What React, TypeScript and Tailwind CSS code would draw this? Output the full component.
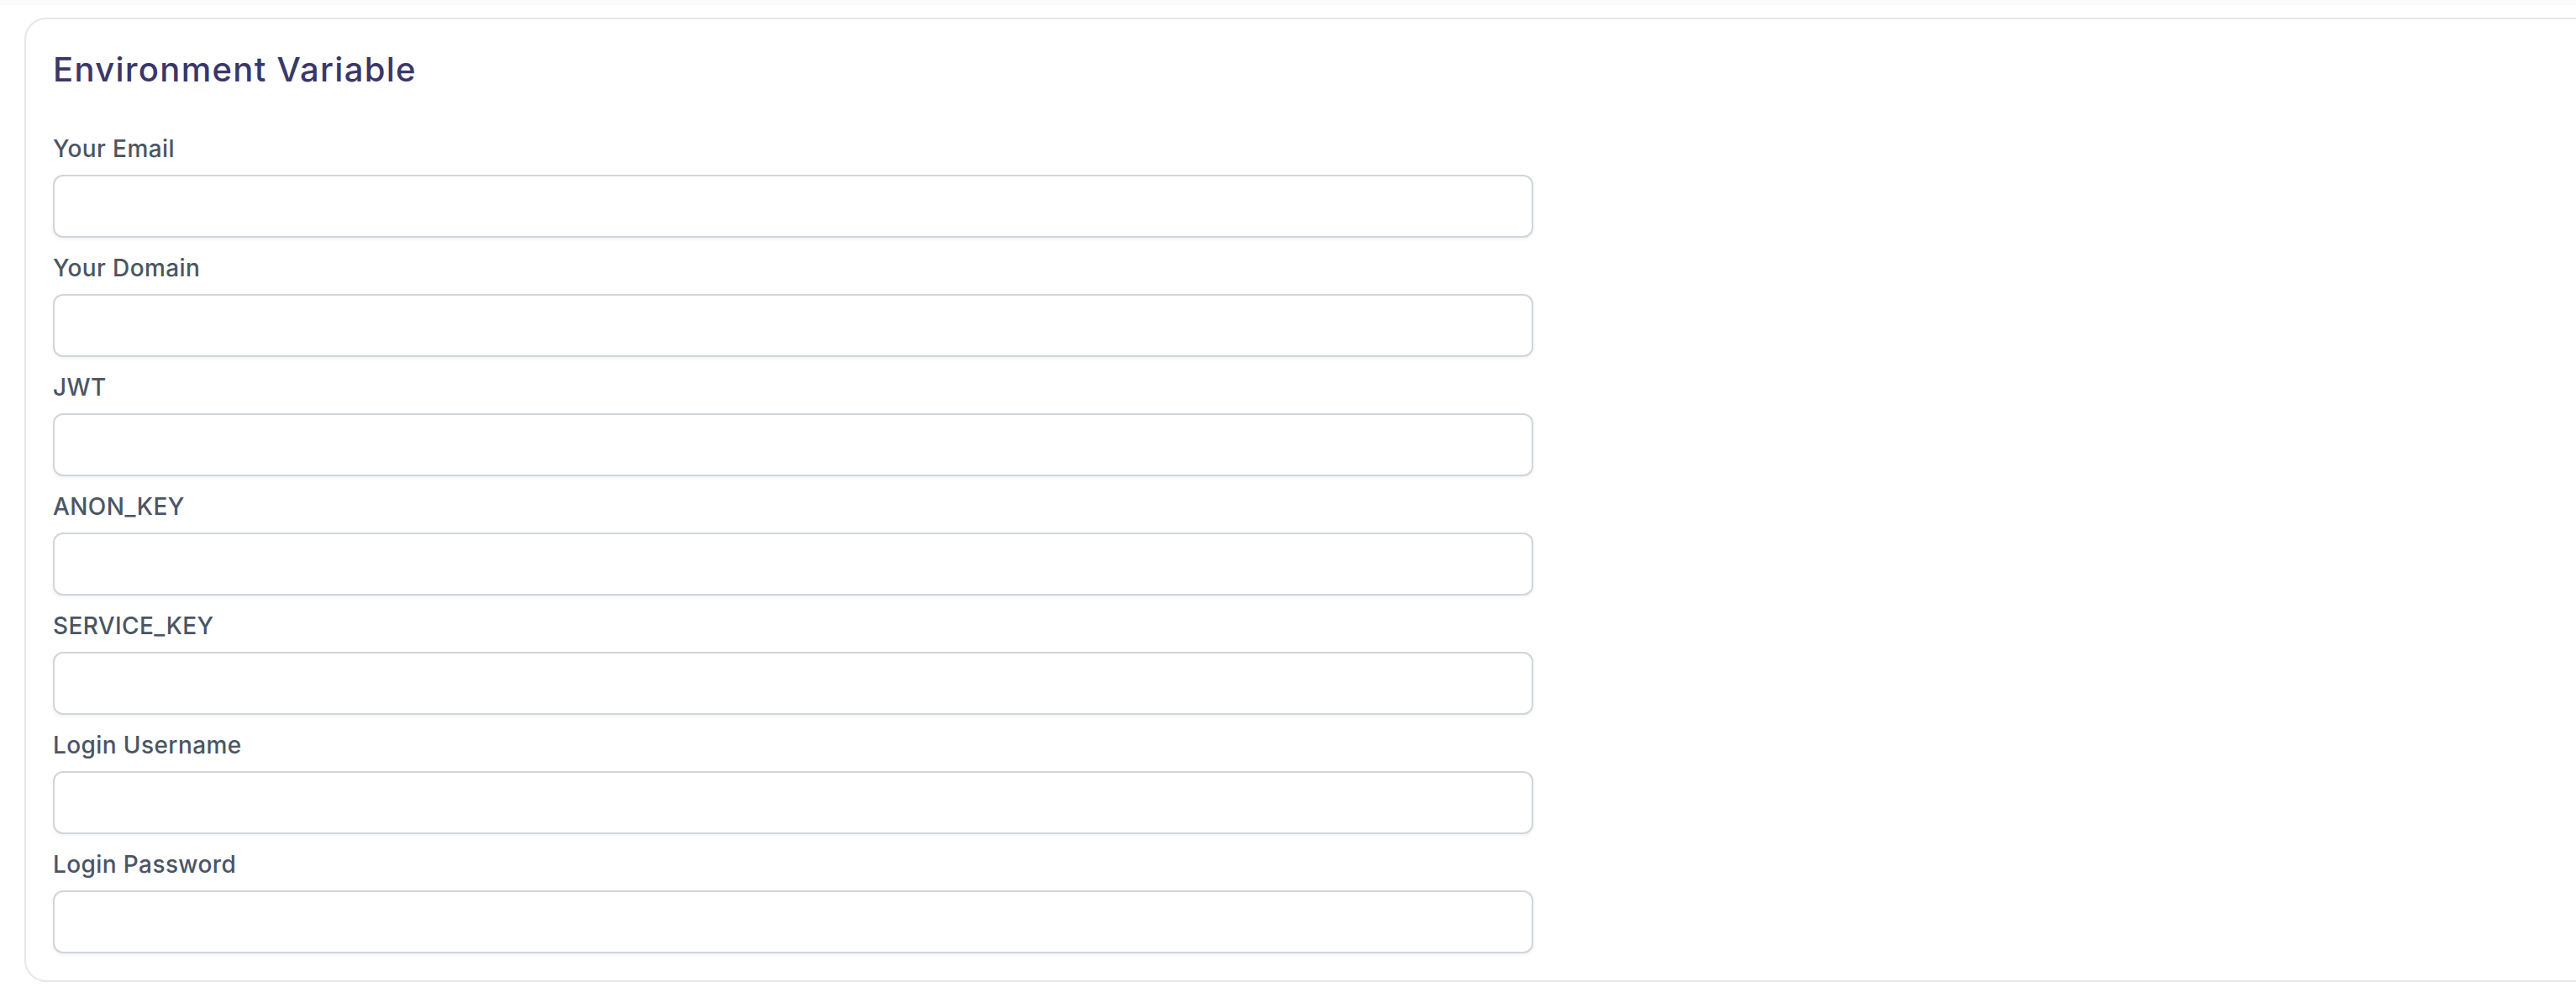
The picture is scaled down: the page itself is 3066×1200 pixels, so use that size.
const fields = [
  "Your Email",
  "Your Domain",
  "JWT",
  "ANON_KEY",
  "SERVICE_KEY",
  "Login Username",
  "Login Password",
];

export default function App() {
  return (
    <div className="min-h-[1200px] w-full overflow-hidden bg-white font-['Inter','Noto_Sans',sans-serif]">
      <div className="h-[6px] bg-[#fafafb]" />
      <div className="pt-[15px] pl-[29px]">
        <div className="w-[3100px] rounded-[26px] border-2 border-[#e5e7eb] bg-white p-[32px]">
          <h2 className="mb-[46px] text-[40px] font-medium leading-[56px] tracking-[1.3px] text-[#3a3768]">
            Environment Variable
          </h2>
          <div className="flex flex-col gap-[16px]">
            {fields.map((label) => (
              <div key={label} className="flex flex-col">
                <label className="mb-[11px] text-[28px] font-medium leading-[40px] tracking-[0.4px] text-[#4b5563]">
                  {label}
                </label>
                <input
                  type="text"
                  className="h-[75px] w-[1762px] rounded-[12px] border-2 border-[#d1d5db] bg-white px-[24px] text-[28px] shadow-[0_2px_4px_rgba(0,0,0,0.05)] outline-none"
                />
              </div>
            ))}
          </div>
        </div>
      </div>
    </div>
  );
}
